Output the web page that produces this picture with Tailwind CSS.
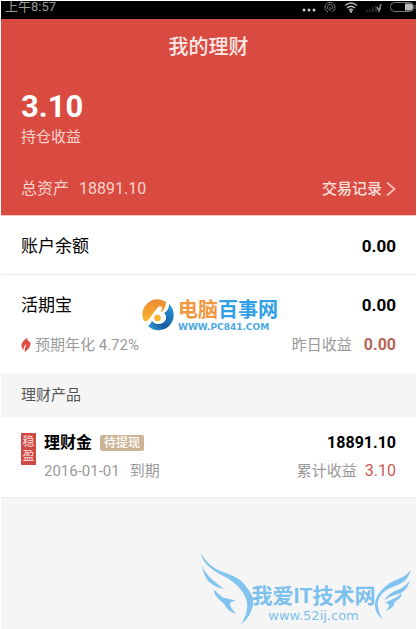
<!DOCTYPE html>
<html lang="zh-CN">
<head>
    <meta charset="UTF-8">
    <meta name="viewport" content="width=device-width, initial-scale=1.0">
    <title>我的理财</title>
    <script src="https://cdn.jsdelivr.net/npm/@tailwindcss/browser@4"></script>
</head>
<body class="relative min-h-screen overflow-x-hidden border-x border-t border-white bg-[#f5f5f5] font-['Roboto','Noto_Sans_CJK_SC',sans-serif] text-[15px] leading-5">
    <!-- Status bar -->
    <div class="flex h-[18px] items-start justify-between bg-black pl-1 text-[#999]">
        <span class="text-[13px] leading-3">上午8:57</span>
        <div class="flex h-3 items-center gap-2">
            <svg class="mt-1.5 h-1 w-3.5" viewBox="0 0 14 4" fill="#ccc"><circle cx="2" cy="2" r="1.5"/><circle cx="7" cy="2" r="1.5"/><circle cx="12" cy="2" r="1.5"/></svg>
            <svg class="h-3 w-3" viewBox="0 0 12 12" fill="none" stroke="#777"><path d="M4 11A5 5 0 1 1 8 11"/><path d="M4.500 8.500A2.700 2.700 0 1 1 7.500 8.500M6 6v4"/></svg>
            <svg class="h-3 w-3.5" viewBox="0 0 14 12" fill="none" stroke="#bbb" stroke-width="1.4"><path d="M1 4.500Q7-.5 13 4.500M3 7q4-3.500 8 0M5 9.200q2-1.800 4 0"/><circle cx="7" cy="10.500" r=".6"/></svg>
            <svg class="h-3 w-4" viewBox="0 0 16 12" stroke="#333" stroke-width="1.500"><path d="M1 11V9M4 11V8M7 11V6M10 11V4"/><path d="M11 6l2 4 2-7M12 8h3" stroke="#888" fill="none"/></svg>
            <svg class="h-3 w-[26px]" viewBox="0 0 26 12"><rect x=".5" y="1.500" width="23" height="9" rx="4" fill="none" stroke="#777"/><path d="M15 2.500h5q3 0 3 3.500t-3 3.500h-5z" fill="#bbb"/><path d="M25 4v4" stroke="#777"/></svg>
        </div>
    </div>

    <!-- Summary -->
    <header class="border-b border-[#fcc5bd] bg-[#d94b41] px-5 pt-4 pb-4 text-[#f9d3ce]">
        <h1 class="text-center text-xl leading-6 font-medium text-[#fdeae7]">我的理财</h1>
        <p class="mt-8 text-[31px] leading-8 font-bold text-white">3.10</p>
        <p class="mt-1">持仓收益</p>
        <div class="mt-8 flex items-center justify-between">
            <p class="flex gap-2.5 text-base leading-5"><span>总资产</span><span>18891.10</span></p>
            <a href="#" class="flex items-center gap-1 font-medium text-[#fbe0dc]">
                交易记录
                <svg class="h-4 w-2.5" viewBox="0 0 10 16" fill="none" stroke="#f5beb7" stroke-width="1.800"><path d="M1 1.500l7.500 6.500L1 14.500"/></svg>
            </a>
        </div>
    </header>

    <!-- Accounts -->
    <section class="bg-white text-black">
        <div class="flex items-center justify-between border-b border-[#ececec] px-5 pt-5 pb-[18px]">
            <h2 class="text-[17px] leading-5">账户余额</h2>
            <span class="text-[17px] leading-5 font-bold">0.00</span>
        </div>
        <div class="px-5 pt-5 pb-[18px]">
            <div class="flex items-center justify-between">
                <h2 class="text-[17px] leading-5">活期宝</h2>
                <span class="text-[17px] leading-5 font-bold">0.00</span>
            </div>
            <div class="mt-5 flex items-center justify-between text-[#999]">
                <p class="flex items-center gap-1">
                    <svg class="h-3.5 w-2.5" viewBox="0 0 10 14" fill="#e14b43"><path d="M6 0C3 2 0 5 .5 8c.2 2 1 3 2 4 0-3 1-5 3-6C4 8 4 11 3.500 14 7 12 10 8 9.500 5 9.300 4 8 3 7 3z"/></svg>
                    <span>预期年化 4.72%</span>
                </p>
                <p class="flex gap-3"><span>昨日收益</span><span class="text-base leading-5 font-bold text-[#b5655a]">0.00</span></p>
            </div>
        </div>
    </section>

    <!-- Products -->
    <h2 class="px-5 py-3 text-[#555]">理财产品</h2>
    <section class="flex gap-2 border-b border-[#eee] bg-white px-5 py-4">
        <div class="h-8 w-[15px] shrink-0 bg-[#cf4a45] pt-0.5 text-center text-xs leading-3.5 text-[#fbdcd8]">稳<br>盈</div>
        <div class="grow">
            <div class="flex items-center justify-between text-base leading-5 font-bold text-black">
                <div class="flex items-center gap-2">
                    <h3>理财金</h3>
                    <span class="rounded-xs bg-[#cbb494] px-1 text-xs leading-4 font-medium text-white">待提现</span>
                </div>
                <span>18891.10</span>
            </div>
            <div class="mt-2 flex items-center justify-between text-[#999]">
                <p class="flex gap-2.5"><span>2016-01-01</span><span>到期</span></p>
                <p class="flex gap-2"><span>累计收益</span><span class="text-base leading-5 text-[#cb5a54]">3.10</span></p>
            </div>
        </div>
    </section>

    <!-- Centre watermark -->
    <div class="absolute top-[297px] left-[141px] flex items-center gap-1">
        <svg class="h-8 w-8" viewBox="0 0 32 32">
            <defs>
                <linearGradient id="orange" x1="0" y1="0" x2="0" y2="1"><stop offset="0" stop-color="#e98a35"/><stop offset="1" stop-color="#fbb62c"/></linearGradient>
                <linearGradient id="blue" x1="1" y1="0" x2="0" y2="1"><stop offset="0" stop-color="#2aa0dd"/><stop offset=".6" stop-color="#1558a0"/><stop offset="1" stop-color="#35a8e0"/></linearGradient>
            </defs>
            <path d="M24 3A15 15 0 0 0 2 22q3 1 5-2l9-12q3-2 4 1l-2 4q3 0 4-3 2-3 2-7z" fill="url(#orange)"/>
            <path d="M27 5A15 15 0 1 1 6 27q3-2 4-5 2 3 7 3c7 0 9-8 5-11 4-2 5-5 5-9z" fill="url(#blue)"/>
            <path d="M18 10l-7 10" stroke="#fff" stroke-width="3.500" stroke-linecap="round"/>
            <circle cx="15.500" cy="19" r="4.500" fill="#f9b52c" stroke="#fff" stroke-width="2.500"/>
        </svg>
        <div>
            <p class="text-xl leading-6 font-bold text-[#309fe6]"><span class="text-[#f0983f]">电脑</span>百事网</p>
            <p class="font-['DejaVu_Sans',sans-serif] text-[9px] leading-2.5 font-bold text-[#4ba8e4]">WWW.PC841.COM</p>
        </div>
    </div>

    <!-- Corner watermark -->
    <div class="absolute top-[551px] left-[199px] h-[76px] w-[214px] text-center text-[#7cc0ee]">
        <svg class="absolute inset-0 h-full w-full" viewBox="0 0 214 76" fill="#82c4f0">
            <path d="M1 1C5 9 10 13 16 17c6 3 11 4 17 7 7 3 11 7 14 12 4 5 7 9 6 16-1 9-6 16-12 20 4-6 7-13 6-21-1-9-9-18-18-24-7-4-13-6-18-11C5 12 2 7 1 1z"/>
            <path d="M2 13c3 9 9 14 22 24C10 34 4 27 2 13z"/>
            <path d="M14 38c4 3 6 6 10 8 4 1 8 1 12 3-3 0-6 1-6 3 0 3 3 6 6 10-5-2-8-4-10-7-1-2-2-3-3-4-2-2-5-4-6-6-2-2-3-4-3-7z"/>
            <path d="M211 18c-3 8-5 10-8 12-4 3-9 4-13 6-4 2-7 4-9 7-3 4-4 8-3 12 1 5 2 8 5 12-5-3-8-8-8-14 0-8 6-16 15-22 5-3 9-4 13-6 3-2 5-4 8-7z"/>
            <path d="M210 28c-2 8-6 13-15 15-4 1-8 3-11 6 3-6 7-8 11-10 6-2 11-5 15-11z"/>
            <path d="M202 41c-1 5-3 6-6 8-2 1-2 3-2 4-2 3-5 4-8 6 1-2 3-4 3-6 0-1-2-2-4-2 2-2 4-2 6-3 4-2 8-4 11-7z"/>
        </svg>
        <div class="relative pt-8">
            <p class="pl-[13px] text-[21px] leading-6 font-bold">我爱IT技术网</p>
            <p class="pl-[13px] font-['DejaVu_Sans',sans-serif] text-[13px] leading-4">www.52ij.com</p>
        </div>
    </div>
</body>
</html>
